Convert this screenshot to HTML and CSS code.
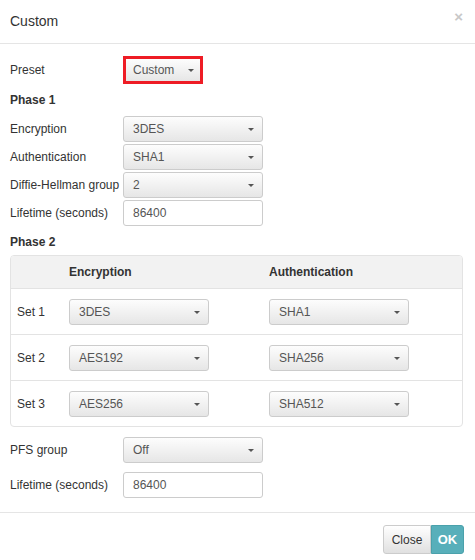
FILE: index.html
```html
<!DOCTYPE html>
<html>
<head>
<meta charset="utf-8">
<link rel="stylesheet" href="styles.css">
</head>
<body>
<div class="modal">
  <div class="modal-header">
    <span class="title">Custom</span>
    <span class="close">&times;</span>
  </div>
  <div class="modal-body">
    <div class="row preset-row">
      <span class="label">Preset</span>
      <div class="highlight"><div class="dd dd-preset"><span>Custom</span><i class="caret"></i></div></div>
    </div>
    <div class="heading h1">Phase 1</div>
    <div class="row"><span class="label">Encryption</span><div class="dd"><span>3DES</span><i class="caret"></i></div></div>
    <div class="row"><span class="label">Authentication</span><div class="dd"><span>SHA1</span><i class="caret"></i></div></div>
    <div class="row"><span class="label">Diffie-Hellman group</span><div class="dd"><span>2</span><i class="caret"></i></div></div>
    <div class="row"><span class="label">Lifetime (seconds)</span><div class="input">86400</div></div>
    <div class="heading h2">Phase 2</div>
    <div class="panel">
      <div class="prow phead">
        <div class="c0"></div>
        <div class="c1">Encryption</div>
        <div class="c2">Authentication</div>
      </div>
      <div class="prow">
        <div class="c0">Set 1</div>
        <div class="c1"><div class="dd"><span>3DES</span><i class="caret"></i></div></div>
        <div class="c2"><div class="dd"><span>SHA1</span><i class="caret"></i></div></div>
      </div>
      <div class="prow">
        <div class="c0">Set 2</div>
        <div class="c1"><div class="dd"><span>AES192</span><i class="caret"></i></div></div>
        <div class="c2"><div class="dd"><span>SHA256</span><i class="caret"></i></div></div>
      </div>
      <div class="prow last">
        <div class="c0">Set 3</div>
        <div class="c1"><div class="dd"><span>AES256</span><i class="caret"></i></div></div>
        <div class="c2"><div class="dd"><span>SHA512</span><i class="caret"></i></div></div>
      </div>
    </div>
    <div class="row pfs"><span class="label">PFS group</span><div class="dd"><span>Off</span><i class="caret"></i></div></div>
    <div class="row life2"><span class="label">Lifetime (seconds)</span><div class="input">86400</div></div>
  </div>
  <div class="modal-footer">
    <div class="btn btn-close">Close</div><div class="btn btn-ok">OK</div>
  </div>
</div>
</body>
</html>
```
FILE: styles.css
```css
* { box-sizing: border-box; }
body {
  margin: 0;
  font-family: "Liberation Sans", Arial, sans-serif;
  font-size: 12px;
  color: #333;
  background: #fff;
}
.modal { width: 475px; }
.modal-header {
  height: 44px;
  border-bottom: 1px solid #e5e5e5;
  display: flex;
  align-items: center;
  justify-content: space-between;
  padding: 0 12px 1px 10px;
}
.title { font-size: 14px; color: #333; }
.close {
  font-size: 15px;
  font-weight: bold;
  color: #c8c8c8;
  margin-top: -10px;
  line-height: 1;
}
.modal-body { padding: 12px 12px 14px 10px; }
.row { display: flex; align-items: center; height: 26px; margin-bottom: 2px; }
.label { width: 113px; flex: none; white-space: nowrap; color: #333; }
.preset-row { height: 28px; margin-bottom: 0; }
.highlight {
  border: 3px solid #ee1c25;
  padding: 0;
  height: 28px;
  width: 80px;
}
.dd {
  width: 140px;
  height: 26px;
  border: 1px solid #ccc;
  border-radius: 3px;
  background: linear-gradient(#fdfdfd, #e6e6e6);
  display: flex;
  align-items: center;
  justify-content: space-between;
  padding: 0 8px 0 9px;
  color: #555;
  font-size: 12px;
}
.dd-preset {
  width: 74px;
  height: 22px;
  border: none;
  border-radius: 0;
  padding: 0 6px 0 7px;
}
.caret {
  width: 0; height: 0;
  border-left: 3px solid transparent;
  border-right: 3px solid transparent;
  border-top: 3px solid #555;
}
.input {
  width: 140px;
  height: 26px;
  border: 1px solid #ccc;
  border-radius: 3px;
  background: #fff;
  display: flex;
  align-items: center;
  padding: 0 9px;
  color: #555;
}
.heading { font-weight: bold; height: 16px; line-height: 16px; }
.h1 { margin: 8px 0 8px 0; }
.h2 { margin: 8px 0 5px 0; }
.panel {
  border: 1px solid #e3e3e3;
  border-radius: 4px;
  overflow: hidden;
}
.prow {
  display: flex;
  align-items: center;
  height: 46px;
  border-bottom: 1px solid #e3e3e3;
  padding-top: 1px;
}
.prow.last { border-bottom: none; height: 45px; }
.phead {
  height: 33px;
  background: #f2f2f2;
  font-weight: bold;
  padding-top: 0;
}
.c0 { width: 58px; padding-left: 6px; flex: none; color: #333; }
.phead .c0 { height: 1px; }
.c1 { width: 200px; flex: none; }
.c2 { flex: 1; }
.pfs { margin-top: 10px; margin-bottom: 9px; }
.life2 { margin-bottom: 0; }
.modal-footer {
  border-top: 1px solid #e5e5e5;
  display: flex;
  justify-content: flex-end;
  padding: 12px 11px 0 0;
}
.btn {
  height: 29px;
  display: flex;
  align-items: center;
  justify-content: center;
  font-size: 12px;
}
.btn-close {
  width: 48px;
  border: 1px solid #ccc;
  border-radius: 3px 0 0 3px;
  background: linear-gradient(#fff, #e0e0e0);
  color: #333;
}
.btn-ok {
  width: 33px;
  border: 1px solid #4aa1ab;
  border-radius: 0 3px 3px 0;
  background: #58afba;
  color: #fff;
  font-weight: bold;
  font-size: 13px;
}
```
